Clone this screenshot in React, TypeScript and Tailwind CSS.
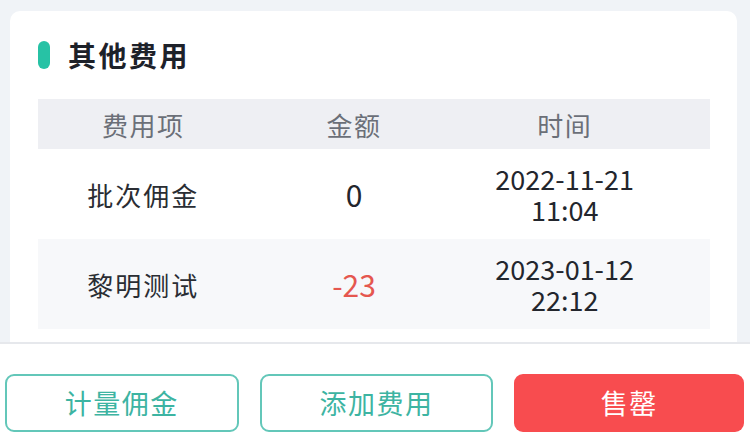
import React from "react";

interface FeeRow {
  name: string;
  amount: string;
  date: string;
  time: string;
  striped?: boolean;
}

const rows: FeeRow[] = [
  { name: "批次佣金", amount: "0", date: "2022-11-21", time: "11:04" },
  { name: "黎明测试", amount: "-23", date: "2023-01-12", time: "22:12", striped: true },
];

function amountColor(amount: string) {
  return amount.startsWith("-") ? "text-[#e5574f]" : "text-[#23262d]";
}

export default function App() {
  return (
    <div
      className="flex h-[448px] w-[750px] flex-col overflow-hidden bg-[#f0f3f7]"
      style={{ fontFamily: '"Noto Sans CJK SC", "Noto Sans", sans-serif' }}
    >
      <div className="min-h-0 flex-1 overflow-hidden pt-[11px] pl-[10px] pr-[13px]">
        <section className="h-[360px] rounded-[10px] bg-white pt-[30px] pl-[28px] pr-[27px]">
          <div className="flex h-[28px] items-center gap-[18px]">
            <span className="h-[28px] w-[12px] rounded-full bg-[#27c2a5]" />
            <h2 className="text-[28px] font-bold tracking-[2.5px] text-[#1d2129]">其他费用</h2>
          </div>

          <div className="mt-[30px]">
            <div className="grid h-[50px] grid-cols-3 items-center bg-[#eeeff3] pr-[40px] text-center text-[26px] tracking-[1.5px] text-[#6b6f78]">
              <span>费用项</span>
              <span>金额</span>
              <span>时间</span>
            </div>
            {rows.map((row) => (
              <div
                key={row.name}
                className={`grid h-[90px] grid-cols-3 items-center pr-[40px] text-center ${
                  row.striped ? "bg-[#f7f8fa]" : "bg-white"
                }`}
              >
                <span className="text-[26px] tracking-[2px] text-[#2a2d33]">{row.name}</span>
                <span className={`text-[30px] ${amountColor(row.amount)}`}>{row.amount}</span>
                <div className="flex flex-col text-[27px] leading-[31px] text-[#23262d]">
                  <span>{row.date}</span>
                  <span>{row.time}</span>
                </div>
              </div>
            ))}
          </div>
        </section>
      </div>

      <footer className="flex h-[106px] shrink-0 gap-[21px] border-t-2 border-[#e6e8ec] bg-white pt-[30px] pl-[5px] pr-[6px]">
        <button
          type="button"
          className="h-[58px] flex-1 rounded-[9px] border-2 border-[#63c7b9] bg-white text-[27px] tracking-[1.5px] text-[#3db4a2]"
        >
          计量佣金
        </button>
        <button
          type="button"
          className="h-[58px] flex-1 rounded-[9px] border-2 border-[#63c7b9] bg-white text-[27px] tracking-[1.5px] text-[#3db4a2]"
        >
          添加费用
        </button>
        <button
          type="button"
          className="h-[58px] flex-1 rounded-[9px] bg-[#f84c4f] text-[27px] tracking-[1.5px] text-white"
        >
          售罄
        </button>
      </footer>
    </div>
  );
}
